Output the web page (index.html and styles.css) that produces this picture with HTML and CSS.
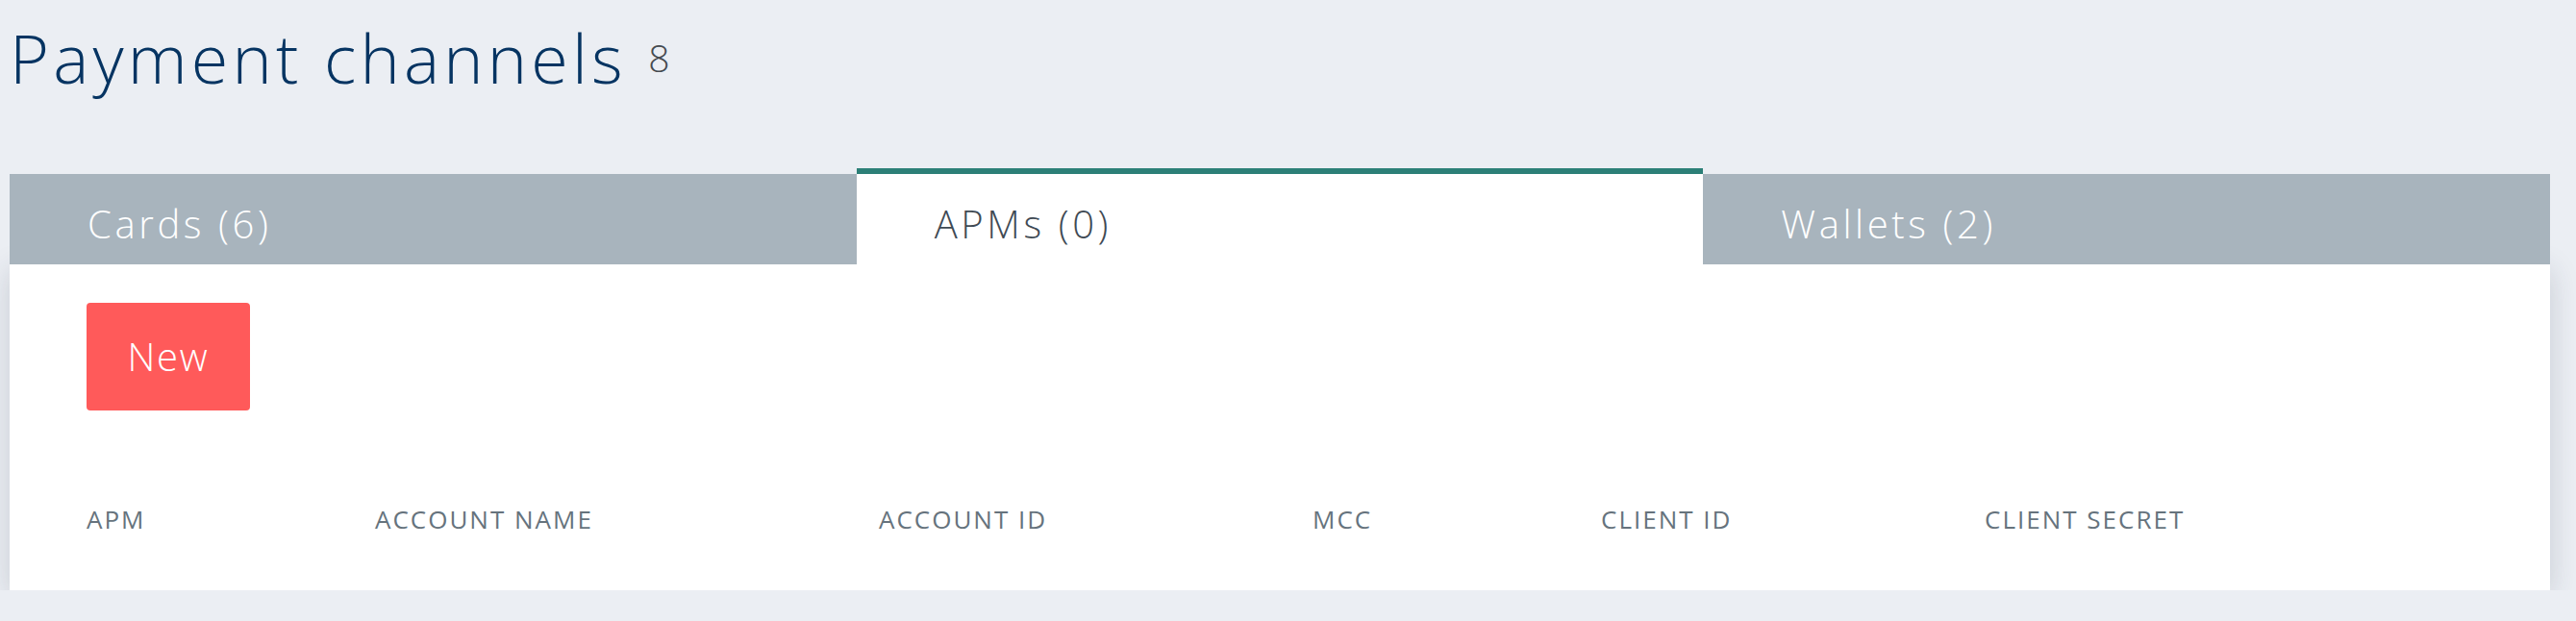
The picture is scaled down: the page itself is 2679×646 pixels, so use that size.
FILE: index.html
```html
<!DOCTYPE html>
<html lang="en">
<head>
<meta charset="utf-8">
<title>Payment channels</title>
<link rel="stylesheet" href="styles.css">
</head>
<body>
<div class="page">
  <h1 class="title">Payment channels <span class="count">8</span></h1>
  <div class="tabs">
    <div class="tab">Cards (6)</div>
    <div class="tab active">APMs (0)</div>
    <div class="tab">Wallets (2)</div>
  </div>
  <div class="panel">
    <button class="btn-new" type="button">New</button>
    <div class="table-head">
      <div class="th">APM</div>
      <div class="th">Account name</div>
      <div class="th">Account ID</div>
      <div class="th">MCC</div>
      <div class="th">Client ID</div>
      <div class="th">Client secret</div>
    </div>
  </div>
</div>
</body>
</html>
```
FILE: styles.css
```css
html, body {
  margin: 0;
  padding: 0;
  background: #ebeef3;
  font-family: "Open Sans", "Liberation Sans", sans-serif;
}

.page {
  padding: 0 27px 0 10px;
}

.title {
  margin: 0;
  padding-top: 25px;
  height: 70px;
  line-height: 70px;
  font-size: 70px;
  font-weight: 300;
  letter-spacing: 4.2px;
  color: #063462;
  white-space: nowrap;
}

.count {
  font-size: 39px;
  font-weight: 300;
  letter-spacing: 0;
  color: #454a50;
  vertical-align: 12px;
}

.tabs {
  margin-top: 80px;
  display: flex;
  align-items: flex-end;
  height: 100px;
}

.tab {
  flex: 1 1 0;
  height: 84px;
  padding: 10px 0 0 81px;
  line-height: 84px;
  font-size: 40px;
  font-weight: 300;
  letter-spacing: 3.6px;
  color: #ffffff;
  background: #a8b4bd;
}

.tab.active {
  background: #ffffff;
  color: #3f4a54;
  border-top: 6px solid #2c7f77;
}

.panel {
  background: #ffffff;
  padding: 40px 80px 24px 80px;
  box-shadow: 0 6px 28px rgba(40, 50, 70, 0.18);
}

.btn-new {
  display: block;
  width: 170px;
  height: 112px;
  padding: 0;
  border: 0;
  border-radius: 4px;
  background: #ff5a5a;
  color: #ffffff;
  font-family: inherit;
  font-size: 40px;
  font-weight: 300;
  letter-spacing: 1.8px;
  line-height: 112px;
}

.table-head {
  margin-top: 63px;
  display: grid;
  grid-template-columns: 300px 524px 451px 300px 399px 1fr;
}

.th {
  height: 100px;
  line-height: 100px;
  font-size: 26px;
  font-weight: 400;
  letter-spacing: 2px;
  color: #66737d;
  text-transform: uppercase;
  white-space: nowrap;
}
```
